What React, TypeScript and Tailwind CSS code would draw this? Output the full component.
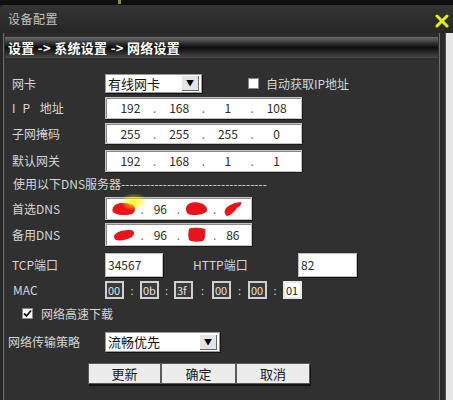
import React from 'react'

const font = { fontFamily: '"Noto Sans CJK SC", "DejaVu Sans", sans-serif' }

function Blob({ w, d }: { w: number; d: string }) {
  return (
    <svg width={w} height="17" viewBox={`0 0 ${w} 17`}>
      <path d={d} fill="#e8141b" />
    </svg>
  )
}

function IpBox({ parts, w }: { parts: React.ReactNode[]; w: string }) {
  return (
    <div className={`${w} h-full bg-white border border-[#c4c4c4] shadow-[inset_1px_1px_0_#8a8a8a,1px_1px_0_#1a1a1a] flex items-center text-[12px] text-[#2a2a2a]`}>
      {parts.map((p, i) => (
        <React.Fragment key={i}>
          {i > 0 && <span className="w-0 flex justify-center text-[#777]">.</span>}
          <span className="flex-1 flex justify-center">{p}</span>
        </React.Fragment>
      ))}
    </div>
  )
}

function Select({ value, w }: { value: string; w: string }) {
  return (
    <div className={`${w} h-full bg-white border border-[#9a9a9a] shadow-[1px_1px_0_#111] flex items-center justify-between pl-[2px] pr-[2px] text-[13px] text-[#111]`}>
      <span>{value}</span>
      <span className="w-[17px] h-[15px] bg-[#e4e4e4] border-r border-b border-[#666] flex items-center justify-center text-[8px] text-black">▼</span>
    </div>
  )
}

function MacBox({ v, light }: { v: string; light?: boolean }) {
  return (
    <div className={`w-[19px] h-full border-2 ${light ? 'bg-white border-[#e6e6e6] text-[#222]' : 'bg-[#3a3a3a] border-[#cfcfcf] text-[#e0e0e0]'} text-[11px] leading-none flex items-center pl-[1px]`}>
      {v}
    </div>
  )
}

function Label({ children }: { children: React.ReactNode }) {
  return <div className="w-[93px] shrink-0 text-[12px] text-[#d6d6d6]">{children}</div>
}

export default function App() {
  return (
    <div className="w-[453px] h-[400px] flex flex-col bg-[#2a2a2a] overflow-hidden" style={font}>
      {/* top strip */}
      <div className="h-[5px] bg-[#0f0f0f] relative shrink-0">
        <div className="absolute left-[118px] top-0 w-[3px] h-[4px] bg-[#8a8a30]"></div>
      </div>

      {/* title bar */}
      <div className="h-[28px] shrink-0 flex items-center justify-between pl-[8px] pr-[4px] bg-gradient-to-b from-[#343434] to-[#262626] rounded-tl-[6px]">
        <span className="text-[12px] text-[#c4c4c4] tracking-[0.5px]">设备配置</span>
        <svg width="14" height="14" viewBox="0 0 14 14" className="mt-[4px]">
          <path d="M2 2 L12 12 M12 2 L2 12" stroke="#2a3a00" strokeWidth="5" strokeLinecap="round" />
          <path d="M2 2 L12 12 M12 2 L2 12" stroke="#e4ea2a" strokeWidth="3" strokeLinecap="round" />
        </svg>
      </div>

      {/* body */}
      <div className="flex-1 flex">
        <div className="w-[3px] bg-[#262626]"></div>
        <div className="w-[437px] flex flex-col border-l border-[#4e4e4e] border-r border-[#6e6e6e] pt-[4px] bg-[#2d2d2d]">
          <div className="h-[21px] mx-[1px] flex items-center pl-[3px] bg-gradient-to-b from-[#6e6e6e] via-[#0e0e0e] to-[#4a4a4a]">
            <span className="text-[13px] font-bold text-white tracking-[0.3px]">设置 -&gt; 系统设置 -&gt; 网络设置</span>
          </div>

          <div className="flex flex-col pl-[8px] bg-[#303030] flex-1">
            {/* 网卡 */}
            <div className="mt-[16px] h-[19px] flex items-center">
              <Label>网卡</Label>
              <Select value="有线网卡" w="w-[97px]" />
              <div className="ml-[46px] w-[11px] h-[11px] bg-white border border-[#888]"></div>
              <span className="ml-[7px] text-[12px] text-[#d6d6d6]">自动获取IP地址</span>
            </div>

            {/* IP */}
            <div className="mt-[4px] h-[22px] flex items-center">
              <Label>
                <span className="tracking-[7px]">IP</span> 地址
              </Label>
              <IpBox w="w-[197px]" parts={['192', '168', '1', '108']} />
            </div>

            <div className="mt-[4px] h-[21px] flex items-center">
              <Label>子网掩码</Label>
              <IpBox w="w-[197px]" parts={['255', '255', '255', '0']} />
            </div>

            <div className="mt-[6px] h-[22px] flex items-center">
              <Label>默认网关</Label>
              <IpBox w="w-[197px]" parts={['192', '168', '1', '1']} />
            </div>

            <div className="mt-[5px] h-[14px] flex items-center text-[12px] text-[#d6d6d6] pl-[1px]">
              使用以下DNS服务器-----------------------------------
            </div>

            {/* DNS */}
            <div className="mt-[6px] h-[23px] flex items-center">
              <Label>首选DNS</Label>
              <div className="relative h-full">
                <IpBox
                  w="w-[147px]"
                  parts={[
                    <Blob key="a" w={26} d="M2 8 C3 3 12 2 19 4 C25 5 26 11 21 14 C15 16 6 15 3 13 C1 11 1 10 2 8 Z" />,
                    '96',
                    <Blob key="b" w={24} d="M1 8 C2 3 9 1 15 3 C20 4 23 8 22 11 C19 15 8 16 3 14 C1 12 1 10 1 8 Z" />,
                    <Blob key="c" w={21} d="M3 10 C5 6 10 3 19 2 C20 5 17 7 15 8 C13 11 10 15 5 16 C3 15 2 12 3 10 Z" />,
                  ]}
                />
                <svg className="absolute left-[14px] -top-[3px]" width="30" height="18" viewBox="0 0 30 18">
                  <defs>
                    <radialGradient id="glow">
                      <stop offset="0%" stopColor="#fff200" stopOpacity="0.9" />
                      <stop offset="100%" stopColor="#fff200" stopOpacity="0" />
                    </radialGradient>
                  </defs>
                  <ellipse cx="15" cy="8" rx="14" ry="9" fill="url(#glow)" />
                </svg>
              </div>
            </div>

            <div className="mt-[3px] h-[23px] flex items-center">
              <Label>备用DNS</Label>
              <IpBox
                w="w-[147px]"
                parts={[
                  <Blob key="a" w={23} d="M1 10 C3 6 9 4 17 4 C22 4 22 8 19 11 C14 14 7 15 3 14 C1 13 1 11 1 10 Z" />,
                  '96',
                  <Blob key="b" w={19} d="M2 3 C6 1 13 2 18 3 C19 8 18 13 16 15 C10 16 5 16 2 14 C1 10 1 7 2 3 Z" />,
                  '86',
                ]}
              />
            </div>

            {/* ports */}
            <div className="mt-[7px] h-[24px] flex items-center">
              <Label>TCP端口</Label>
              <div className="w-[58px] h-full bg-white border border-[#bdbdbd] shadow-[1px_1px_0_#111] text-[12px] text-[#2a2a2a] flex items-center pl-[2px]">34567</div>
              <span className="ml-[30px] w-[105px] text-[12px] text-[#d6d6d6]">HTTP端口</span>
              <div className="w-[59px] h-full bg-white border border-[#bdbdbd] shadow-[1px_1px_0_#111] text-[12px] text-[#2a2a2a] flex items-center pl-[2px]">82</div>
            </div>

            {/* MAC */}
            <div className="mt-[4px] h-[18px] flex items-center">
              <Label>
                <span className="pl-[1px]">MAC</span>
              </Label>
              <div className="flex items-center h-full text-[#cfcfcf] text-[11px]">
                <MacBox v="00" />
                <span className="w-[16px] text-center">:</span>
                <MacBox v="0b" />
                <span className="w-[15px] text-center">:</span>
                <MacBox v="3f" />
                <span className="w-[19px] text-center">:</span>
                <MacBox v="00" />
                <span className="w-[17px] text-center">:</span>
                <MacBox v="00" />
                <span className="w-[16px] text-center">:</span>
                <MacBox v="01" light />
              </div>
            </div>

            {/* checkbox */}
            <div className="mt-[8px] h-[13px] flex items-center pl-[10px]">
              <div className="w-[11px] h-[11px] bg-white border border-[#888] flex items-center justify-center">
                <svg width="9" height="9" viewBox="0 0 9 9">
                  <path d="M1 4.5 L3.5 7 L8 1.5" stroke="#111" strokeWidth="1.8" fill="none" />
                </svg>
              </div>
              <span className="ml-[8px] text-[12px] text-[#d6d6d6]">网络高速下载</span>
            </div>

            {/* 策略 */}
            <div className="mt-[12px] h-[20px] flex items-center -ml-[4px]">
              <div className="w-[97px] shrink-0 text-[12px] text-[#d6d6d6]">网络传输策略</div>
              <Select value="流畅优先" w="w-[115px]" />
            </div>

            {/* buttons */}
            <div className="mt-[11px] h-[21px] flex pl-[76px]">
              {['更新', '确定', '取消'].map((t, i) => (
                <button
                  key={t}
                  className={`${i === 0 ? 'w-[73px]' : i === 1 ? 'w-[75px]' : 'w-[74px]'} h-full bg-[#ececec] border border-[#5a5a5a] shadow-[1px_2px_0_#151515] text-[13px] text-[#1a1a1a] flex items-center justify-center`}
                >
                  {t}
                </button>
              ))}
            </div>
          </div>
        </div>
        <div className="w-[6px] bg-[#2a2a2a] border-r border-[#505050]"></div>
        <div className="w-[7px] bg-[#e6e6e6]"></div>
      </div>
    </div>
  )
}
